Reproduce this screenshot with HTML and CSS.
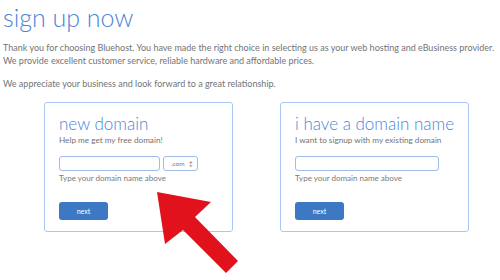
FILE: index.html
```html
<!DOCTYPE html>
<html>
<head>
<meta charset="utf-8">
<link rel="stylesheet" href="styles.css">
</head>
<body>
<div class="page">
  <h1 class="title">sign up now</h1>
  <p class="intro">Thank you for choosing Bluehost. You have made the right choice in selecting us as your web hosting and eBusiness provider.<br>We provide excellent customer service, reliable hardware and affordable prices.</p>
  <p class="intro second">We appreciate your business and look forward to a great relationship.</p>
  <div class="cards">
    <div class="card">
      <h2 class="card-title">new domain</h2>
      <p class="card-sub">Help me get my free domain!</p>
      <div class="field-row">
        <div class="input short"></div>
        <div class="select">.com <span class="arrows">&#x2195;</span></div>
      </div>
      <p class="hint">Type your domain name above</p>
      <div class="btn">next</div>
    </div>
    <div class="card">
      <h2 class="card-title">i have a domain name</h2>
      <p class="card-sub">I want to signup with my existing domain</p>
      <div class="field-row">
        <div class="input long"></div>
      </div>
      <p class="hint">Type your domain name above</p>
      <div class="btn">next</div>
    </div>
  </div>
  <svg class="arrow" width="500" height="280" viewBox="0 0 500 280">
    <polygon points="157,192 211,202 195,217 238,261 226,273 183,230 165,244" fill="#e2121c"/>
  </svg>
</div>
</body>
</html>
```
FILE: styles.css
```css
html, body {
  margin: 0;
  padding: 0;
  background: #fff;
}
.page {
  position: relative;
  width: 500px;
  height: 280px;
  overflow: hidden;
  font-family: Lato, "Open Sans", sans-serif;
  color: #747474;
}
.title {
  margin: 0;
  padding: 2px 0 0 3px;
  font-family: Lato, sans-serif;
  font-weight: 300;
  font-size: 25px;
  line-height: 30px;
  color: #4b86d6;
  letter-spacing: 0;
}
.intro {
  margin: 10px 0 0 3px;
  font-size: 9px;
  line-height: 12.5px;
  white-space: nowrap;
}
.intro.second {
  margin-top: 11px;
}
.cards {
  display: flex;
  gap: 47px;
  margin: 11px 0 0 44px;
}
.card {
  box-sizing: border-box;
  width: 189px;
  height: 130px;
  border: 1px solid #adc6ef;
  border-radius: 3px;
  padding: 11px 0 0 14px;
}
.card-title {
  margin: 0;
  font-weight: 300;
  font-size: 17px;
  line-height: 20px;
  color: #4b86d6;
}
.card-sub {
  margin: 1px 0 0;
  font-size: 8.2px;
  line-height: 10px;
}
.field-row {
  display: flex;
  gap: 3px;
  margin-top: 11px;
}
.input, .select {
  box-sizing: border-box;
  height: 15px;
  border: 1px solid #9fbbe6;
  border-radius: 3px;
  background: #fff;
}
.input.short { width: 101px; }
.input.long { width: 144px; }
.select {
  width: 35px;
  font-size: 6.5px;
  line-height: 13px;
  padding-left: 7px;
  color: #777;
  position: relative;
}
.arrows {
  position: absolute;
  right: 4px;
  top: 0;
  font-size: 6px;
}
.hint {
  margin: 2px 0 0;
  font-size: 8px;
  line-height: 10px;
  color: #7a7a7a;
}
.btn {
  margin-top: 19px;
  width: 49px;
  height: 18px;
  background: #3c78c3;
  border-radius: 3px;
  color: #fff;
  font-size: 7px;
  line-height: 18px;
  text-align: center;
}
.arrow {
  position: absolute;
  left: 0;
  top: 0;
}
```
